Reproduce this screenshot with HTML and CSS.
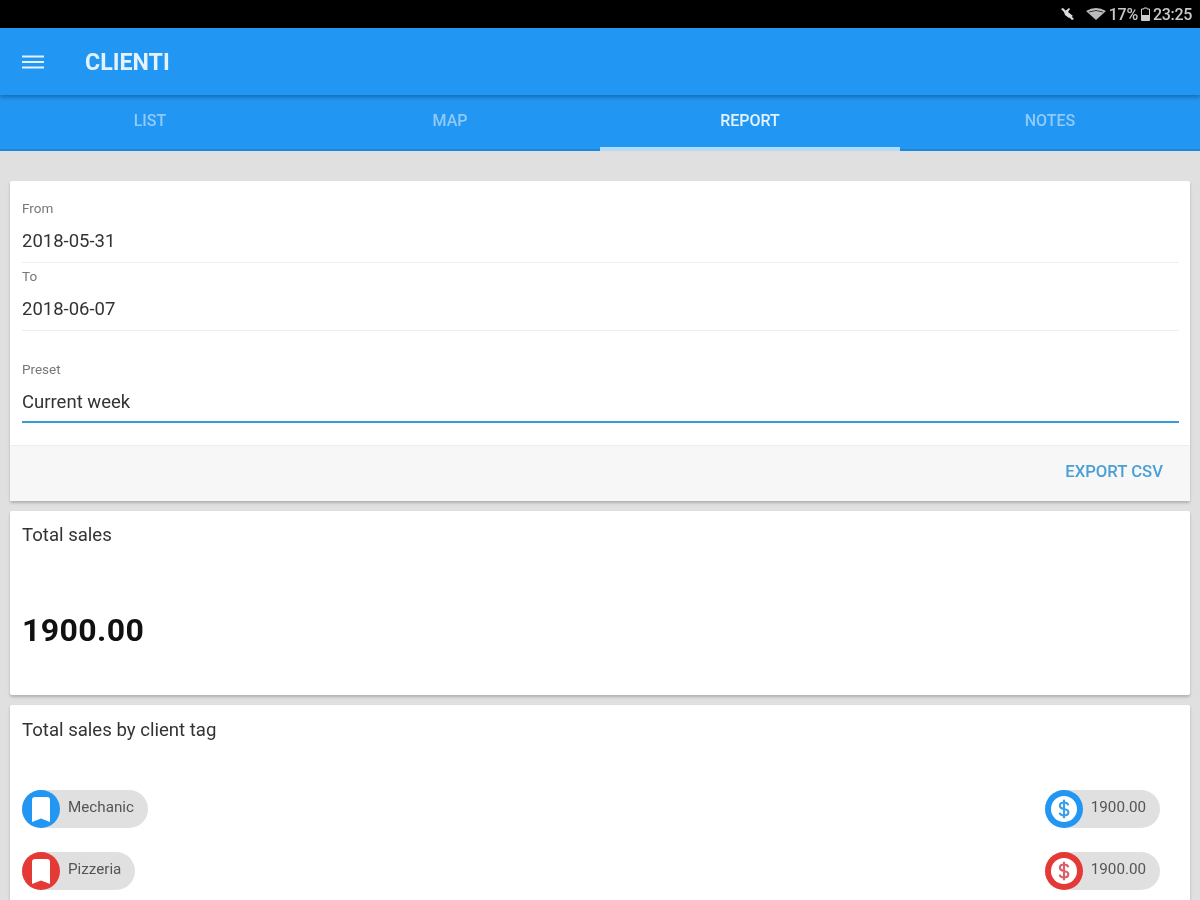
FILE: index.html
```html
<!DOCTYPE html>
<html lang="en">
<head>
<meta charset="utf-8">
<title>Clienti</title>
<link rel="stylesheet" href="styles.css">
</head>
<body>
<div class="status">
  <svg class="st-mute" viewBox="0 0 16 14" width="16" height="14"><path d="M1 2 L3 1 L14 12 L12 13 Z M4 5 L9 1 L10 2 L8 5 L13 9 L9 11 L5 8 Z" fill="#ddd"/></svg>
  <svg class="st-wifi" viewBox="0 0 20 14" width="20" height="14"><path d="M0 4 Q10 -2 20 4 L10 13 Z" fill="#bbb"/><path d="M3 5 Q10 2 17 5" stroke="#333" stroke-width="1" fill="none"/></svg>
  <span class="st-text">17%</span>
  <svg class="st-batt" viewBox="0 0 9 14" width="9" height="14"><path d="M3 1 H6 V2 H8.500 V13.500 H.5 V2 H3 Z" fill="none" stroke="#ccc"/><rect x="1" y="8" width="7" height="5" fill="#ccc"/></svg>
  <span class="st-text">23:25</span>
</div>
<header class="appbar">
  <svg class="menu" viewBox="0 0 22 14" width="22" height="14"><path d="M0 1.500 H22 M0 7 H22 M0 12.500 H22" stroke="#e3f2fd" stroke-width="2.200"/></svg>
  <h1 class="title">CLIENTI</h1>
</header>
<nav class="tabs">
  <div class="tab">LIST</div>
  <div class="tab">MAP</div>
  <div class="tab active">REPORT</div>
  <div class="tab">NOTES</div>
</nav>
<main class="content">
  <section class="card">
    <div class="form">
      <div class="field">
        <div class="label">From</div>
        <div class="value">2018-05-31</div>
      </div>
      <div class="field">
        <div class="label">To</div>
        <div class="value">2018-06-07</div>
      </div>
      <div class="field preset">
        <div class="label">Preset</div>
        <div class="value">Current week</div>
      </div>
    </div>
    <div class="actions"><span class="export">EXPORT CSV</span></div>
  </section>
  <section class="card total">
    <div class="card-title">Total sales</div>
    <div class="amount">1900.00</div>
  </section>
  <section class="card tags">
    <div class="card-title">Total sales by client tag</div>
    <div class="rows">
      <div class="row">
        <div class="chip"><span class="avatar blue"><svg viewBox="0 0 18 25" width="18" height="25"><path d="M3 0 H15 Q18 0 18 3 V25 L9 21.500 L0 25 V3 Q0 0 3 0 Z" fill="#fff"/></svg></span><span class="chip-text">Mechanic</span></div>
        <div class="chip"><span class="avatar blue"><span class="coin"><svg viewBox="0 0 24 24" width="26" height="26"><path d="M16 8.500 C15.500 6.800 14 6 12 6 C9.800 6 8.200 7.200 8.200 9 C8.200 13.500 16 10.500 16 15 C16 16.900 14.200 18 12 18 C9.800 18 8.300 17 8 15.300 M12 3.500 V20.500" fill="none" stroke="#3a9ee8" stroke-width="2"/></svg></span></span><span class="chip-text num">1900.00</span></div>
      </div>
      <div class="row">
        <div class="chip"><span class="avatar red"><svg viewBox="0 0 18 25" width="18" height="25"><path d="M3 0 H15 Q18 0 18 3 V25 L9 21.500 L0 25 V3 Q0 0 3 0 Z" fill="#fff"/></svg></span><span class="chip-text">Pizzeria</span></div>
        <div class="chip"><span class="avatar red"><span class="coin"><svg viewBox="0 0 24 24" width="26" height="26"><path d="M16 8.500 C15.500 6.800 14 6 12 6 C9.800 6 8.200 7.200 8.200 9 C8.200 13.500 16 10.500 16 15 C16 16.900 14.200 18 12 18 C9.800 18 8.300 17 8 15.300 M12 3.500 V20.500" fill="none" stroke="#d9606a" stroke-width="2"/></svg></span></span><span class="chip-text num">1900.00</span></div>
      </div>
    </div>
  </section>
</main>
</body>
</html>
```
FILE: styles.css
```css
* { box-sizing: border-box; }
html, body { margin: 0; height: 900px; overflow: hidden; }
body { font-family: Roboto, "Liberation Sans", sans-serif; background: #e0e0e0; color: #333; filter: blur(0.6px); }
.status { height: 28px; background: #000; display: flex; align-items: center; justify-content: flex-end; padding: 0 8px 0 0; gap: 3px; }
.st-mute { margin-right: 7px; }
.st-text { color: #c8c8c8; font-size: 16px; font-weight: 500; letter-spacing: -0.3px; }
.appbar { height: 67px; background: #2196f3; display: flex; align-items: center; padding-left: 22px; gap: 41px; position: relative; box-shadow: 0 2px 4px rgba(0,0,0,.3); z-index: 1; }
.title { margin: 0; font-size: 23.200px; font-weight: 700; color: #e3f2fd; }
.tabs { height: 56px; background: #2196f3; display: flex; border-bottom: 2px solid #1a86dc; }
.tab { flex: 1; display: flex; align-items: center; justify-content: center; height: 54px; padding-bottom: 3px; font-size: 16px; font-weight: 500; color: #90caf9; }
.tab.active { color: #e3f2fd; height: 56px; border-bottom: 4px solid #b3dcf9; padding-bottom: 1px; }
.content { padding: 30px 10px 0; display: flex; flex-direction: column; gap: 10px; }
.card { background: #fff; border-radius: 2px; box-shadow: 0 2px 3px rgba(0,0,0,.22); }
.form { padding: 18px 11px 0 12px; height: 264px; }
.field { height: 64px; margin-bottom: 4px; border-bottom: 1px solid #eee; }
.label { font-size: 13.500px; line-height: 18px; color: #777; }
.value { font-size: 18.500px; line-height: 24px; margin-top: 12px; color: #333; }
.field.preset { height: 63px; margin-top: 29px; margin-bottom: 0; border-bottom: 2px solid #3a9bd9; }
.actions { height: 56px; background: #f7f7f7; border-top: 1px solid #eee; display: flex; align-items: center; justify-content: flex-end; padding: 0 27px 5px 0; }
.export { font-size: 16.700px; font-weight: 500; color: #4a9fd4; }
.card.total { height: 184px; padding: 12px; }
.card-title { font-size: 18.600px; line-height: 24px; color: #333; }
.amount { font-size: 32px; font-weight: 700; color: #111; margin-top: 64px; line-height: 38px; letter-spacing: .4px; }
.card.tags { height: 260px; padding: 13px 30px 0 12px; }
.rows { margin-top: 48px; display: flex; flex-direction: column; gap: 24px; }
.row { display: flex; justify-content: space-between; }
.chip { display: flex; align-items: center; height: 38px; border-radius: 19px; background: #e0e0e0; padding-right: 14px; }
.avatar { width: 38px; height: 38px; border-radius: 50%; display: flex; align-items: center; justify-content: center; }
.avatar.blue { background: #2196f3; }
.avatar.red { background: #e53935; }
.coin { width: 26px; height: 26px; border-radius: 50%; background: #fff; display: flex; align-items: center; justify-content: center; }
.chip-text { font-size: 15.200px; color: #555; margin-left: 8px; padding-bottom: 4px; }
```
